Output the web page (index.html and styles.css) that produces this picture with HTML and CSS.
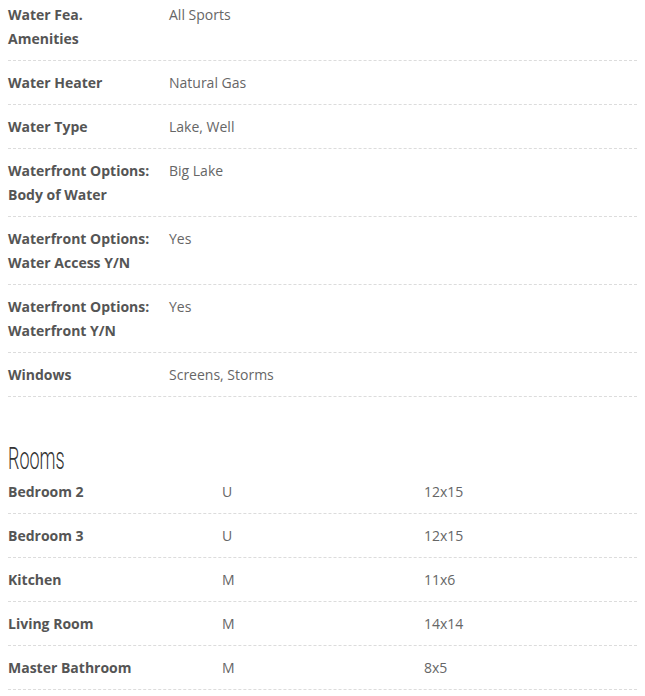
FILE: index.html
```html
<!DOCTYPE html>
<html>
<head>
<meta charset="utf-8">
<link rel="stylesheet" href="styles.css">
</head>
<body>
<div class="features">
  <div class="row"><div class="label">Water Fea. Amenities</div><div class="value">All Sports</div></div>
  <div class="row"><div class="label">Water Heater</div><div class="value">Natural Gas</div></div>
  <div class="row"><div class="label">Water Type</div><div class="value">Lake, Well</div></div>
  <div class="row"><div class="label">Waterfront Options: Body of Water</div><div class="value">Big Lake</div></div>
  <div class="row"><div class="label">Waterfront Options: Water Access Y/N</div><div class="value">Yes</div></div>
  <div class="row"><div class="label">Waterfront Options: Waterfront Y/N</div><div class="value">Yes</div></div>
  <div class="row"><div class="label">Windows</div><div class="value">Screens, Storms</div></div>
</div>
<h2 class="section-title"><span class="title-text">Rooms</span></h2>
<div class="rooms">
  <div class="room"><div class="label">Bedroom 2</div><div class="value">U</div><div class="value">12x15</div></div>
  <div class="room"><div class="label">Bedroom 3</div><div class="value">U</div><div class="value">12x15</div></div>
  <div class="room"><div class="label">Kitchen</div><div class="value">M</div><div class="value">11x6</div></div>
  <div class="room"><div class="label">Living Room</div><div class="value">M</div><div class="value">14x14</div></div>
  <div class="room"><div class="label">Master Bathroom</div><div class="value">M</div><div class="value">8x5</div></div>
</div>
</body>
</html>
```
FILE: styles.css
```css
html, body {
  margin: 0;
  padding: 0;
  background: #fff;
}
body {
  padding: 0 8px;
  font-family: "Open Sans", "Noto Sans", sans-serif;
  font-size: 14px;
  line-height: 24px;
  color: #666;
  overflow: hidden;
}
.features {
  margin-top: -7px;
}
.row {
  display: grid;
  grid-template-columns: 161px 1fr;
  padding: 9.5px 0;
  border-bottom: 1px dashed #dcdcdc;
}
.label {
  font-weight: 700;
  color: #555;
  padding-right: 14px;
}
.value {
  color: #666;
}
.section-title {
  margin: 50px 0 0 0;
  font-family: Roboto, sans-serif;
  font-weight: 300;
  font-size: 31px;
  line-height: 23px;
  color: #333;
}
.title-text {
  display: inline-block;
  transform: scaleX(0.58);
  transform-origin: left center;
}
.room {
  display: grid;
  grid-template-columns: 214px 202px 1fr;
  padding: 9.5px 0;
  border-bottom: 1px dashed #dcdcdc;
}
.room .label {
  padding-right: 0;
}
```
